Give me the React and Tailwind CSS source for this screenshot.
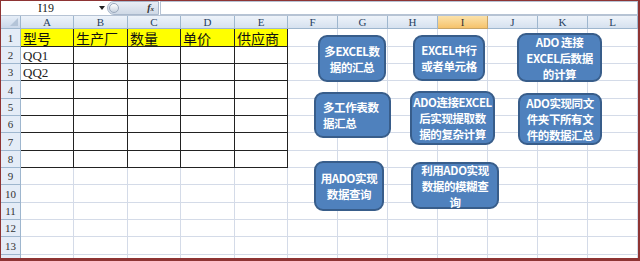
import React from "react";

const colW = [53, 54, 53, 54, 53, 50, 50, 50, 50, 50, 50, 50];
const cols = ["A", "B", "C", "D", "E", "F", "G", "H", "I", "J", "K", "L"];
const rowH = [18, 17, 17, 18, 17, 17, 18, 17, 17, 18, 17, 17, 18, 6];
const header = ["型号", "生产厂", "数量", "单价", "供应商"];

function Cell({ r, c }) {
  const inTable = r <= 8 && c <= 4;
  const yellow = r === 1 && c <= 4;
  let text = "";
  if (r === 1 && c <= 4) text = header[c];
  if (r === 2 && c === 0) text = "QQ1";
  if (r === 3 && c === 0) text = "QQ2";
  return (
    <div
      className={
        "flex items-center pl-[2px] overflow-hidden whitespace-nowrap border-r border-b " +
        (inTable ? "border-r-[#222222] border-b-[#222222] " : "border-r-[#d4dbe8] border-b-[#d4dbe8] ") +
        (yellow ? "bg-[#ffff00] " : "bg-white ")
      }
      style={{ width: colW[c], height: rowH[r - 1] }}
    >
      {text && (
        <span
          className={
            r === 1
              ? "text-[14px] leading-[16px] text-[#111] font-['Noto_Sans_CJK_SC',sans-serif]"
              : "text-[13px] leading-[15px] text-[#222] font-['Liberation_Serif',serif]"
          }
        >
          {text}
        </span>
      )}
    </div>
  );
}

const boxes = [
  { x: 318, y: 35, w: 68, h: 47, t: ["多EXCEL数", "据的汇总"], align: "center" },
  { x: 413, y: 35, w: 72, h: 46, t: ["EXCEL中行", "或者单元格"], align: "center" },
  { x: 517, y: 33, w: 85, h: 49, t: ["ADO 连接", "EXCEL后数据", "的计算"], align: "center" },
  { x: 314, y: 92, w: 77, h: 46, t: ["多工作表数", "据汇总"], align: "left" },
  { x: 410, y: 91, w: 85, h: 54, t: ["ADO连接EXCEL", "后实现提取数", "据的复杂计算"], align: "center" },
  { x: 518, y: 93, w: 84, h: 52, t: ["ADO实现同文", "件夹下所有文", "件的数据汇总"], align: "center" },
  { x: 314, y: 161, w: 70, h: 50, t: ["用ADO实现", "数据查询"], align: "center" },
  { x: 411, y: 162, w: 88, h: 47, t: ["利用ADO实现", "数据的模糊查", "询"], align: "center" },
];

export default function App() {
  return (
    <div className="relative w-[640px] h-[261px] overflow-hidden bg-white border-t border-l border-r-2 border-b-[3px] border-[#8e3434] font-['Liberation_Serif',serif]">
      {/* formula bar */}
      <div className="flex h-[15px] border-b border-[#b6c3d4] bg-white">
        <div className="relative w-[106px] flex items-center">
          <span className="ml-[37px] text-[12px] leading-[14px] text-[#222] font-['Liberation_Serif',serif]">I19</span>
          <span className="absolute left-[98px] top-[5px] w-0 h-0 border-l-[3px] border-r-[3px] border-t-[4px] border-l-transparent border-r-transparent border-t-[#222]" />
        </div>
        <div className="relative w-[52px] h-[14px] flex items-center justify-end pr-[4px] bg-gradient-to-b from-[#e9eef5] to-[#cfd9e6] rounded-l-[7px] border border-[#a9b8cc]">
          <span className="absolute left-[1px] top-[1px] w-[10px] h-[10px] rounded-full bg-gradient-to-b from-[#ffffff] to-[#c9d3e0] border border-[#9aa9bd]" />
          <span className="text-[10px] italic font-bold leading-[10px] text-[#333] font-['Liberation_Serif',serif]">f<span className="text-[7px]">x</span></span>
        </div>
        <div className="flex-1 h-[14px] border border-[#b6c3d4] bg-white ml-[1px]" />
      </div>
      {/* column header */}
      <div className="flex h-[13px]">
        <div className="relative w-[20px] h-[13px] bg-gradient-to-b from-[#e6eef8] to-[#cbd8ea] border-r border-b border-[#9eb6ce]">
          <span className="absolute right-[2px] bottom-[2px] w-0 h-0 border-l-[8px] border-b-[8px] border-l-transparent border-b-[#b4c4d8]" />
        </div>
        {cols.map((c, i) => (
          <div
            key={c}
            className={
              "h-[13px] flex items-center justify-center border-r border-b text-[11px] leading-[11px] font-['Liberation_Serif',serif] " +
              (c === "I"
                ? "bg-gradient-to-b from-[#fbe2aa] to-[#f6c36b] border-[#c8a465] text-[#333]"
                : "bg-gradient-to-b from-[#eef3fa] to-[#d6e1ef] border-[#9eb6ce] text-[#27415f]")
            }
            style={{ width: colW[i] }}
          >
            {c}
          </div>
        ))}
      </div>
      {/* rows */}
      {rowH.map((h, ri) => {
        const r = ri + 1;
        return (
          <div key={r} className="flex" style={{ height: h }}>
            <div className="w-[20px] flex items-center justify-center bg-[#e4ecf7] border-r border-b border-[#9eb6ce] text-[11px] leading-[12px] text-[#333] font-['Liberation_Serif',serif]" style={{ height: h }}>
              {r <= 13 ? r : ""}
            </div>
            {cols.map((c, ci) => (
              <Cell key={c} r={r} c={ci} />
            ))}
          </div>
        );
      })}
      {/* shapes */}
      {boxes.map((b, i) => (
        <div
          key={i}
          className={
            "absolute flex flex-col justify-center rounded-[9px] bg-[#4f81bd] border-2 border-[#385d8a] text-white font-bold text-[11.5px] leading-[16px] tracking-[-0.4px] font-['Noto_Sans_CJK_SC',sans-serif] whitespace-nowrap " +
            (b.align === "left" ? "items-start pl-[7px]" : "items-center")
          }
          style={{ left: b.x - 1, top: b.y - 1, width: b.w, height: b.h }}
        >
          {b.t.map((l, j) => (
            <span key={j}>{l}</span>
          ))}
        </div>
      ))}
    </div>
  );
}
